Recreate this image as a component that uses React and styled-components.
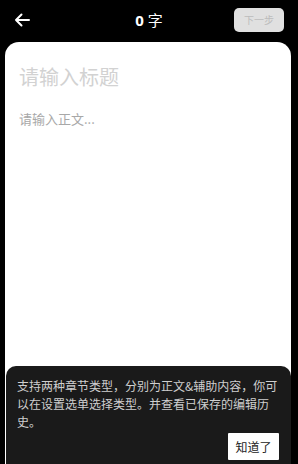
import React from "react";
import styled, { createGlobalStyle } from "styled-components";

const Global = createGlobalStyle`
  html, body { margin: 0; padding: 0; background: #000; }
  body { font-family: "Noto Sans CJK SC", "Noto Sans", sans-serif; }
  * { box-sizing: border-box; }
`;

const Page = styled.div`
  width: 298px;
  height: 464px;
  background: #000;
  display: flex;
  flex-direction: column;
  position: relative;
  overflow: hidden;
`;

const Header = styled.div`
  height: 42px;
  display: grid;
  grid-template-columns: 60px 1fr 60px;
  align-items: center;
  padding: 0 14px 3px 14px;
`;

const Back = styled.button`
  background: none;
  border: none;
  padding: 0;
  width: 16px;
  height: 14px;
  display: flex;
  align-items: center;
`;

const Count = styled.div`
  text-align: center;
  color: #fff;
  font-size: 15px;
  line-height: 20px;
  & b { font-family: "Noto Sans", sans-serif; font-weight: 700; margin-right: 4px; }
`;

const NextBtn = styled.button`
  justify-self: end;
  width: 50px;
  height: 24px;
  border: none;
  border-radius: 5px;
  background: #e0e0e0;
  color: #bcbcbc;
  font-family: "Noto Sans CJK SC", sans-serif;
  font-size: 10px;
  padding: 0;
`;

const Card = styled.div`
  flex: 1;
  margin: 0 7px 0 5px;
  background: #fff;
  border-radius: 14px 14px 0 0;
  padding: 20px 14px;
  display: flex;
  flex-direction: column;
`;

const TitleInput = styled.div`
  font-size: 20px;
  line-height: 30px;
  color: #d2d2d2;
`;

const BodyInput = styled.div`
  margin-top: 17px;
  font-size: 13px;
  line-height: 20px;
  color: #a8a8a8;
`;

const Tip = styled.div`
  position: absolute;
  left: 6px;
  right: 7px;
  top: 366px;
  bottom: -10px;
  background: #1a1a1a;
  border-radius: 10px;
  padding: 11px 11px 0 11px;
  display: flex;
  flex-direction: column;
`;

const TipText = styled.p`
  margin: 0;
  font-size: 12px;
  line-height: 18px;
  color: #cfcfcf;
`;

const TipBtn = styled.button`
  align-self: flex-end;
  margin-top: 2px;
  margin-right: 1px;
  width: 51px;
  height: 27px;
  border: none;
  border-radius: 1px;
  background: #fff;
  color: #222;
  font-family: "Noto Sans CJK SC", sans-serif;
  font-size: 12px;
  padding: 0;
`;

export default function App() {
  return (
    <Page>
      <Global />
      <Header>
        <Back aria-label="back">
          <svg width="16" height="14" viewBox="0 0 16 14" fill="none">
            <path d="M15 7H2M7.5 1.5L2 7l5.5 5.5" stroke="#fff" strokeWidth="2" strokeLinecap="round" strokeLinejoin="round" />
          </svg>
        </Back>
        <Count><b>0</b>字</Count>
        <NextBtn>下一步</NextBtn>
      </Header>
      <Card>
        <TitleInput>请输入标题</TitleInput>
        <BodyInput>请输入正文...</BodyInput>
      </Card>
      <Tip>
        <TipText>支持两种章节类型，分别为正文&amp;辅助内容，你可以在设置选单选择类型。并查看已保存的编辑历史。</TipText>
        <TipBtn>知道了</TipBtn>
      </Tip>
    </Page>
  );
}
